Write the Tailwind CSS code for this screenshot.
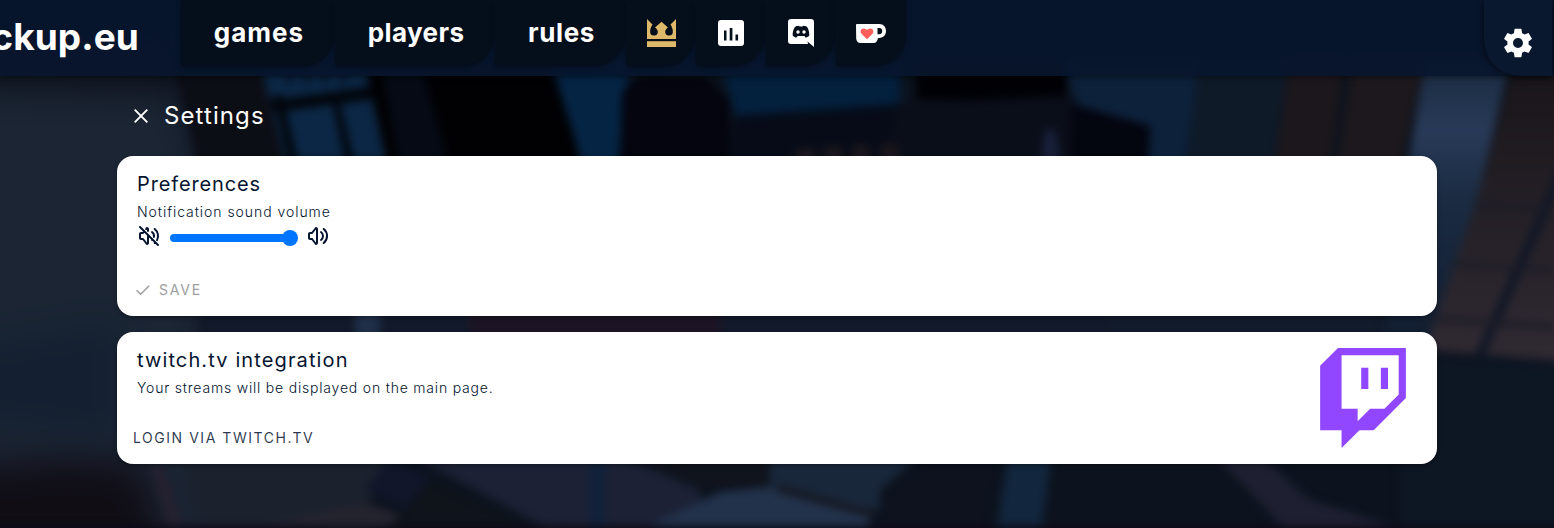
<!DOCTYPE html>
<html lang="en">
<head>
<meta charset="utf-8">
<title>Settings</title>
<script src="https://cdn.jsdelivr.net/npm/@tailwindcss/browser@4"></script>
</head>
<body class="h-[528px] overflow-hidden bg-[#0d1420] font-[Inter,sans-serif] text-[#051430]">
<div class="relative isolate h-full overflow-hidden">

<!-- blurred scene backdrop -->
<svg class="absolute inset-0 -z-10" width="1554" height="528" viewBox="0 0 1554 528">
  <defs>
    <filter id="b" x="-5%" y="-5%" width="110%" height="110%" color-interpolation-filters="sRGB"><feGaussianBlur stdDeviation="4.500"/></filter>
    <filter id="b2" x="-5%" y="-5%" width="110%" height="110%" color-interpolation-filters="sRGB"><feGaussianBlur stdDeviation="18"/></filter>
    <linearGradient id="pane" x1="0" y1="0" x2="0" y2="1"><stop offset="0" stop-color="#18151a"/><stop offset="1" stop-color="#302a33"/></linearGradient>
    <linearGradient id="beam" x1="0" y1="0" x2="0" y2="1"><stop offset="0" stop-color="#1a2a40"/><stop offset=".25" stop-color="#283a57"/><stop offset=".5" stop-color="#1a2b42"/><stop offset="1" stop-color="#121e30"/></linearGradient>
  </defs>
  <rect width="1554" height="528" fill="#0c131e"/>
  <g filter="url(#b2)">
    <path d="M-40 90L190 70L230 560H-40z" fill="#1b2534"/>
    <path d="M-40 40H190V95L-40 88z" fill="#0e131d"/>
    <path d="M-40 345L120 320V440L-40 420z" fill="#142031"/>
    <path d="M-40 470L60 460L140 465L170 560H-40z" fill="#100d15"/>
  </g>
  <g filter="url(#b)">
    <path d="M172 60H270L290 170H200z" fill="#0c0e16"/>
    <path d="M262 70H365L385 160H285z" fill="#0b2745"/>
    <path d="M268 101L375 86V99L275 112zM282 95L299 165H290L273 95zM338 95L355 165H346L331 95z" fill="#02050b"/>
    <path d="M290 60v25M307 60v25M325 60v25M343 60v25" stroke="#071629" stroke-width="5"/>
    <path d="M365 60H560L580 170H390z" fill="#010104"/>
    <path d="M380 60H420L450 170H400z" fill="#050a15"/>
    <path d="M550 60H630L617 170H585z" fill="#052444"/>
    <path d="M622 92L640 76H705L730 100V170H620z" fill="#04050e"/>
    <path d="M720 60H900V105L735 116z" fill="#03203d"/>
    <path d="M735 116L900 104V170H730z" fill="#060b17"/>
    <path d="M916 60H1066V100H916z" fill="#000106"/>
    <path d="M900 104L1060 96L1150 126L1148 170H880z" fill="#0a0e19"/>
    <path d="M1062 60H1200L1185 170H1148L1150 126L1078 105z" fill="#0d213b"/>
    <path d="M1072 105L1150 126L1148 170H1070z" fill="#03050f"/>
    <path d="M1198 60H1290L1272 170H1187z" fill="#0e1a28"/>
    <path d="M1290 60H1345L1330 170H1273z" fill="#1b171d"/>
    <path d="M1353 60H1425L1400 170H1336z" fill="#1c181e"/>
    <path d="M1425 60H1510L1445 340H1380z" fill="url(#beam)"/>
    <path d="M1514 60H1570V362L1425 350L1475 205z" fill="url(#pane)"/>
    <path d="M1565 165L1480 355" stroke="#111826" stroke-width="10"/>
    <path d="M1475 205L1554 208M1452 264L1554 270M1430 318L1554 327" stroke="#1a1b26" stroke-width="5"/>
    <path d="M1400 354L1570 364V540H1400z" fill="#0d1623"/>
    <path d="M796 148h20v20h-20zM824 146h18v20h-18zM852 145h18v20h-18zM880 144h18v20h-18z" fill="#1b161c"/>
    <path d="M1045 130h10l6 30h-20z" fill="#18203a"/>
    <path d="M200 305H1110V345H200z" fill="#12192a"/>
    <path d="M355 305H380V345H355z" fill="#1f2f48"/>
    <path d="M470 312H720V336H470z" fill="#1c1424"/>
    <path d="M1110 305H1380V345H1110z" fill="#121b2b"/>
    <path d="M180 455H400L370 500L220 540H200z" fill="#1b222e"/>
    <path d="M150 465L162 465L186 535H172z" fill="#262130"/>
    <path d="M210 540L365 502L400 515L380 540z" fill="#24242f"/>
    <path d="M365 490L390 455L430 480L410 510z" fill="#11162a"/>
    <path d="M405 510L430 480L560 540H375z" fill="#0f131a"/>
    <path d="M410 455H620L700 490V540H570z" fill="#1c2135"/>
    <path d="M590 455h15v85h-15z" fill="#10213a"/>
    <path d="M630 455H770V485L700 488z" fill="#10141d"/>
    <path d="M640 530L720 492L777 486L870 505V540H640z" fill="#22324b"/>
    <path d="M770 455H920L880 490V510L770 485z" fill="#19273b"/>
    <path d="M777 488L875 515" stroke="#151822" stroke-width="8"/>
    <path d="M880 495L925 462H1000L985 540H880z" fill="#0d121e"/>
    <path d="M1008 455H1052L1040 540H995z" fill="#12263d"/>
    <path d="M1055 455H1230L1270 540H1045z" fill="#0d131e"/>
    <path d="M1215 455H1260L1310 500L1400 528L1300 545z" fill="#1e2032"/>
    <path d="M-5 526H1560V536H-5z" fill="#0b0a18"/>
  </g>
</svg>

<header class="flex h-[76px] items-start bg-[#08162e]/92 shadow-[0_1px_6px_rgba(0,0,0,0.5)]">
  <div class="flex h-[73px] w-[139px] shrink-0 items-center justify-end text-[37px] font-bold whitespace-nowrap text-white"><span class="tracking-[0.1px]">ckup.eu</span></div>
  <nav class="ml-[42px] flex h-[66px] gap-px text-[26px] font-bold text-white">
    <a class="flex w-[153px] items-center justify-center rounded-br-[32px] rounded-bl bg-[#050e1b] pb-px pl-[3px] shadow-[0_1px_5px_rgba(0,0,0,0.45)]"><span class="tracking-[1px]">games</span></a>
    <a class="flex w-[159px] items-center justify-center rounded-br-[32px] rounded-bl bg-[#050e1b] pb-px pl-[3px] shadow-[0_1px_5px_rgba(0,0,0,0.45)]"><span class="tracking-[0.4px]">players</span></a>
    <a class="flex w-[130px] items-center justify-center rounded-br-[32px] rounded-bl bg-[#050e1b] pb-px pl-[3px] shadow-[0_1px_5px_rgba(0,0,0,0.45)]"><span class="tracking-[0.6px]">rules</span></a>
    <a class="flex w-[69px] items-center justify-center rounded-br-[32px] rounded-bl bg-[#050e1b] pl-0.5 shadow-[0_1px_5px_rgba(0,0,0,0.45)]">
      <svg width="29" height="28" viewBox="0 0 29 28" fill="#deb96a"><path d="M0 0L5.500 5.500C4 8 3 10.500 3.200 12.500A3.800 3.800 0 0 0 10.800 13C10.800 11 9.500 9.500 8 8.500L14.500 2.700L21 8.500C19.500 9.500 18.200 11 18.200 13A3.800 3.800 0 0 0 25.800 12.500C26 10.500 25 8 23.500 5.500L29 0V20H0z"/><path d="M0 22.200h29V28H0z"/></svg>
    </a>
    <a class="flex w-[69px] items-center justify-center rounded-br-[32px] rounded-bl bg-[#050e1b] shadow-[0_1px_5px_rgba(0,0,0,0.45)]">
      <svg width="26" height="26" viewBox="0 0 26 26"><rect width="26" height="26" rx="3" fill="#fff"/><path d="M6 10.500h2.500v10H6zM11.700 8h2.700v12.500h-2.700zM17.500 14.500h2.600v6h-2.600z" fill="#050e1b"/></svg>
    </a>
    <a class="flex w-[69px] items-center justify-center rounded-br-[32px] rounded-bl bg-[#050e1b] shadow-[0_1px_5px_rgba(0,0,0,0.45)]">
      <svg width="26" height="28" viewBox="0 0 26 28"><path d="M3 0H23A3 3 0 0 1 26 3V28L19.500 22.500L20 25H3A3 3 0 0 1 0 22V3A3 3 0 0 1 3 0z" fill="#fff"/><path d="M8 7.300L11 6.700L11.500 7.500H14.500L15 6.700L18 7.300C20 8 21.500 13 21.300 16.500C20 18 18.500 18.500 17.500 18.500L16.400 17H9.600L8.500 18.500C7.500 18.500 6 18 4.700 16.500C4.500 13 6 8 8 7.300z" fill="#050e1b"/><circle cx="10" cy="13" r="1.700" fill="#fff"/><circle cx="16" cy="13" r="1.700" fill="#fff"/></svg>
    </a>
    <a class="flex w-[70px] items-center justify-center rounded-br-[32px] rounded-bl bg-[#050e1b] shadow-[0_1px_5px_rgba(0,0,0,0.45)]">
      <svg width="30" height="19" viewBox="0 0 30 19"><path fill="#fff" fill-rule="evenodd" d="M1 0H23.500C27.500 0 30 3 30 7C30 11.500 27 14 22 14C21.500 17 20 19 17.500 19H4.500C2 19 .3 17 .2 14.500L0 1A1 1 0 0 1 1 0zM21.500 4V10.300H23C25.200 10.300 26.200 9 26.200 7C26.200 5 25 4 23.500 4z"/><path d="M11 15.300L5.700 9.900C3.500 7.500 5 4.400 7.700 4.400C9.300 4.400 10.300 5.200 11 6.200C11.700 5.200 12.700 4.400 14.300 4.400C17 4.400 18.500 7.500 16.300 9.900z" fill="#ff5e5b"/></svg>
    </a>
  </nav>
  <button class="mr-0.5 ml-auto flex h-[76px] w-[68px] items-center justify-center rounded-bl-[36px] bg-[#09182f] pt-2.5 shadow-[0_1px_7px_rgba(0,0,0,0.65)]">
    <svg width="34" height="34" viewBox="0 0 24 24" fill="#fff"><path d="M19.430 12.980c.04-.32.07-.64.07-.98s-.03-.66-.07-.98l2.110-1.650c.19-.15.24-.42.12-.64l-2-3.460c-.12-.22-.39-.3-.61-.22l-2.490 1c-.52-.4-1.080-.73-1.690-.98l-.38-2.650C14.460 2.180 14.250 2 14 2h-4c-.25 0-.46.18-.49.42l-.38 2.650c-.61.25-1.170.59-1.690.98l-2.490-1c-.23-.09-.49 0-.61.22l-2 3.460c-.13.22-.07.49.12.64l2.110 1.650c-.04.32-.07.65-.07.98s.03.66.07.98l-2.110 1.650c-.19.15-.24.42-.12.64l2 3.460c.12.22.39.3.61.22l2.490-1c.52.4 1.080.73 1.690.98l.38 2.650c.03.24.24.42.49.42h4c.25 0 .46-.18.49-.42l.38-2.650c.61-.25 1.170-.59 1.690-.98l2.490 1c.23.09.49 0 .61-.22l2-3.460c.12-.22.07-.49-.12-.64l-2.110-1.650zM12 15.500c-1.930 0-3.500-1.570-3.500-3.500s1.570-3.500 3.500-3.500 3.500 1.570 3.500 3.500-1.570 3.500-3.500 3.500z"/></svg>
  </button>
</header>

<main class="ml-[117px] w-[1320px]">
  <div class="flex h-20 items-center pl-[17px] text-2xl leading-8 text-white">
    <svg class="mr-4" width="14" height="14" viewBox="0 0 14 14" fill="none" stroke="#fff" stroke-width="1.900"><path d="M.7.7l12.600 12.600M13.300.7L.7 13.300"/></svg>
    <h1 class="tracking-[1.1px]">Settings</h1>
  </div>

  <section class="h-40 rounded-2xl bg-white px-5 pt-3.5 shadow-[0_2px_4px_rgba(0,0,0,0.3)]">
    <h2 class="text-xl leading-7"><span class="tracking-[0.87px]">Preferences</span></h2>
    <p class="mt-1 text-sm leading-5 font-light"><span class="tracking-[0.95px]">Notification sound volume</span></p>
    <div class="mt-0.5 flex h-6 items-center">
      <svg width="24" height="24" viewBox="0 0 24 24" fill="none" stroke="currentColor" stroke-width="2" stroke-linecap="round" stroke-linejoin="round"><path d="M15 8a5 5 0 0 1 1.912 4.934m-1.377 2.602a5 5 0 0 1-.535.464M17.700 5a9 9 0 0 1 2.362 11.086m-1.676 2.299a9 9 0 0 1-.686.615M9.069 5.054l.431-.554a.8.8 0 0 1 1.500.5v2m0 4v8a.8.8 0 0 1-1.500.5l-3.500-4.500h-2a1 1 0 0 1-1-1v-4a1 1 0 0 1 1-1h2l1.294-1.664M3 3l18 18"/></svg>
      <div class="mt-1 ml-[9px] flex h-4 w-32 items-center">
        <div class="h-2 w-[120px] rounded-l-full bg-[#0075ff]"></div>
        <div class="-ml-2 size-4 rounded-full bg-[#0075ff]"></div>
      </div>
      <svg class="ml-2" width="24" height="24" viewBox="0 0 24 24" fill="none" stroke="currentColor" stroke-width="2" stroke-linecap="round" stroke-linejoin="round"><path d="M15 8a5 5 0 0 1 0 8M17.700 5a9 9 0 0 1 0 14M6 15h-2a1 1 0 0 1-1-1v-4a1 1 0 0 1 1-1h2l3.500-4.500a.8.8 0 0 1 1.500.5v14a.8.8 0 0 1-1.500.5l-3.500-4.500"/></svg>
    </div>
    <button class="mt-8 -ml-px flex h-5 items-center text-sm text-[#9e9e9e]">
      <svg class="mr-[9px]" width="14" height="10" viewBox="0 0 14 10" fill="none" stroke="currentColor" stroke-width="1.500"><path d="M.6 5.200L4.700 9.200L13.200.7"/></svg>
      <span class="tracking-[1.8px]">SAVE</span>
    </button>
  </section>

  <section class="mt-4 flex h-[132px] justify-between rounded-2xl bg-white pr-[31px] pl-5 shadow-[0_2px_4px_rgba(0,0,0,0.3)]">
    <div class="pt-3.5">
      <h2 class="text-xl leading-7"><span class="tracking-[1.12px]">twitch.tv integration</span></h2>
      <p class="mt-1 text-sm leading-5 font-light"><span class="tracking-[0.8px]">Your streams will be displayed on the main page.</span></p>
      <button class="mt-[30px] -ml-1 block h-5 text-sm text-[#051430]/85"><span class="tracking-[1.54px]">LOGIN VIA TWITCH.TV</span></button>
    </div>
    <svg class="mt-4" width="86" height="100" viewBox="0 0 2400 2800" fill="#9146ff"><path fill-rule="evenodd" d="M1500 0H500L0 500v1800h600v500l500-500h400l900-900V0zM2200 1300l-400 400h-400l-350 350v-350H600V200h1600z"/><path d="M1700 550h200v600h-200zM1150 550h200v600h-200z"/></svg>
  </section>
</main>
</div>
</body>
</html>
